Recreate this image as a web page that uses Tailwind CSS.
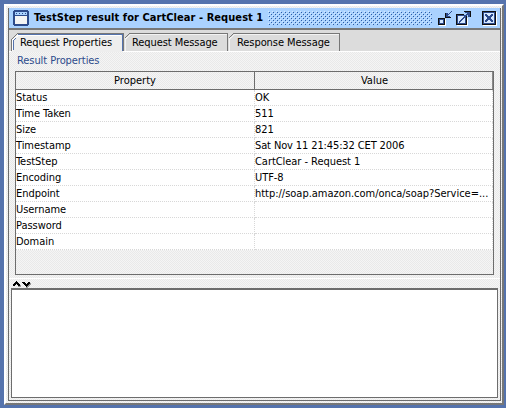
<!DOCTYPE html>
<html lang="en">
<head>
<meta charset="utf-8">
<title>TestStep result</title>
<script src="https://cdn.jsdelivr.net/npm/@tailwindcss/browser@4"></script>
</head>
<body class="w-[506px] h-[408px] overflow-hidden bg-[#5573ad] pt-1 pl-1 font-['DejaVu_Sans_Condensed','DejaVu_Sans',sans-serif] [font-stretch:condensed] text-[11px] leading-4 text-black">
<div class="w-[500px] h-[401px] border-t-2 border-l-2 border-t-white border-l-white border-r-2 border-b-2 border-r-[#777] border-b-[#777] p-0.5 bg-[#eeeeee] bg-[conic-gradient(#f5f5f5_25%,#e9e9e9_0_50%,#f5f5f5_0_75%,#e9e9e9_0)] bg-[length:2px_2px]">
  <div class="w-[493px] h-[393px] border-l border-r border-b border-[#6d6d6d] flex flex-col">
    <header class="h-[22px] shrink-0 bg-[#aad2ff] border-b-2 border-[#777] flex items-center">
      <svg class="ml-1 shrink-0" width="16" height="16" shape-rendering="crispEdges"><path fill="#2d4b8c" d="M1 0h14v1h1v14h-1v1H1v-1H0V1h1z"/><path fill="#aad2ff" d="M2 2h12v3H2z"/><path fill="#f4f4f4" d="M2 6h12v8H2z"/><path fill="#2d4b8c" d="M3 3h1v1H3zM6 3h1v1H6zM9 3h1v1H9zM12 3h1v1h-1z"/></svg>
      <h1 class="ml-[5px] w-[234px] whitespace-nowrap font-bold text-[11px] tracking-[0.06px]">TestStep result for CartClear - Request 1</h1>
      <svg class="shrink-0" width="164" height="14" shape-rendering="crispEdges"><defs><pattern id="bump" width="4" height="4" patternUnits="userSpaceOnUse"><path fill="#d4e8ff" d="M0 0h1v1H0zM2 2h1v1H2z"/><path fill="#2d5da5" d="M1 1h1v1H1zM3 3h1v1H3z"/></pattern></defs><rect width="164" height="14" fill="url(#bump)"/></svg>
      <svg class="ml-[6px] shrink-0" width="62" height="16" shape-rendering="crispEdges">
        <path fill="none" stroke="#fff" d="M1 15.500h6.500V9M19 15.500h10.500V8M45 15.500h13.500V2"/>
        <path fill="#111" d="M0 8h7v7H0zM18 4h8v2h3v9H18zM44 1h14v14H44z"/>
        <path fill="#2d4b8c" d="M1 9h5v5H1zM19 5h8v2h1v7h-9zM45 2h12v12H45z"/>
        <path fill="#d5e8ff" d="M2 10h3v3H2zM20 6h6v1h1v6h-7zM46 3h10v10H46z"/>
        <path fill="#111" d="M7 3h1v4h5v1H7zM26 1h7v6h-1V2h-6z"/>
        <path fill="#2d4b8c" d="M8 3h2v1h1V3h1V2h1V1h1v1h-1v1h-1v1h-1v1h-1v1h2v1H8zM27 2h5v5h-2V5h-1v1h-1v1h-1v1h-1v1h-1v1h-1v1h-1v1h-1v1h-1v-2h1v-1h1V9h1V8h1V7h1V6h1V5h1V4h1V3h-2z"/>
        <path fill="#2d4b8c" d="M47 4h2v1h1v1h2V5h1V4h2v2h-1v1h-1v2h1v1h1v2h-2v-1h-1v-1h-2v1h-1v1h-2v-2h1V9h1V7h-1V6h-1z"/>
      </svg>
    </header>
    <nav class="relative h-[22px] shrink-0 bg-[#dcdcdc] border-b border-white pt-[4px] pl-0.5">
      <svg class="absolute left-0 top-0" width="340" height="22" shape-rendering="crispEdges">
        <path fill="#eeeeee" d="M2 22V10l6-6h106v18z"/>
        <path fill="none" stroke="#777" d="M2.500 21V9.500L8.500 3.500h106V21"/>
        <path fill="none" stroke="#5573ad" d="M4.500 20v-10L9.500 4.500h104V20.500"/>
        <path fill="none" stroke="#fff" d="M3.500 21V10L9 5.500h103"/>
        <path fill="none" stroke="#777" d="M115.500 8.500l5-5h98V21M219.500 8.500l5-5h106V21"/>
        <path fill="none" stroke="#f3f3f3" d="M116.500 21V9l5-4.500h96M220.500 21V9l5-4.500h104"/>
      </svg>
      <div class="relative flex leading-[18px] whitespace-nowrap tracking-[-0.07px]">
        <span class="w-[112px] pl-[9px]">Request Properties</span><span class="w-[105px] pl-[9px]">Request Message</span><span class="pl-[9px]">Response Message</span>
      </div>
    </nav>
    <main class="h-[227px] shrink-0 px-[6px] border-b border-white">
      <h2 class="h-5 pt-px pl-0.5 text-[#2d4b8c] tracking-[-0.07px]">Result Properties</h2>
      <div class="h-[204px] w-[479px] -mt-px border border-[#6d6d6d]">
        <div class="h-[18px] flex border-b border-[#6d6d6d] text-center">
          <div class="w-[239px] border-r border-[#6d6d6d] pt-px">Property</div><div class="flex-1 border-r border-[#888] pt-px pl-0.5">Value</div>
        </div>
        <div class="grid grid-cols-[239px_1fr] auto-rows-[16px] leading-[15px] whitespace-nowrap bg-white tracking-[-0.05px] [&>*]:border-b [&>*]:border-r [&>*]:border-dotted [&>*]:border-[#d8d8d8]">
          <span>Status</span><span>OK</span>
          <span>Time Taken</span><span>511</span>
          <span>Size</span><span>821</span>
          <span>Timestamp</span><span class="tracking-[-0.12px]">Sat Nov 11 21:45:32 CET 2006</span>
          <span>TestStep</span><span>CartClear - Request 1</span>
          <span>Encoding</span><span>UTF-8</span>
          <span>Endpoint</span><span class="tracking-[-0.02px]">http://soap.amazon.com/onca/soap?Service=...</span>
          <span>Username</span><span></span>
          <span>Password</span><span></span>
          <span>Domain</span><span></span>
        </div>
      </div>
    </main>
    <div class="h-[9px] shrink-0 pl-[3px] pt-px"><svg width="20" height="8" shape-rendering="crispEdges"><path d="M0 5l4-4 4 4-1 1H6L4 4 2 6H1zM10 2h2l2 2 2-2h2v1l-4 4-4-4z"/><path fill="#999" d="M6 6h2V5h1v1L8 7H6zM18 3h1v1l-4 4h-1z"/></svg></div>
    <section class="ml-0.5 w-[487px] h-[110px] shrink-0 bg-white border border-t-2 border-[#6d6d6d]"></section>
  </div>
</div>
</body>
</html>
